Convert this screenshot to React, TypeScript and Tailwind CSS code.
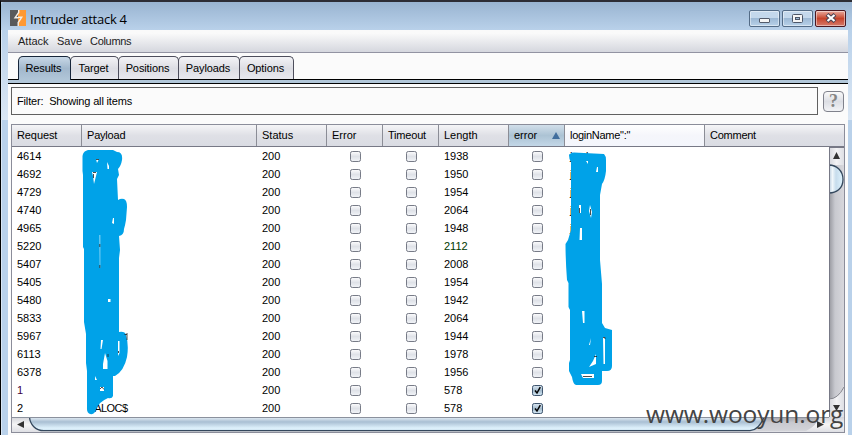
import React from "react";

type Row = { id: string; length: string; payload?: string; login?: string; checked?: boolean };

const rows: Row[] = [
  { id: "4614", length: "1938", login: "jordan" },
  { id: "4692", length: "1950", login: "j" },
  { id: "4729", length: "1954", login: "j" },
  { id: "4740", length: "2064", login: "j" },
  { id: "4965", length: "1948", login: "jenny" },
  { id: "5220", length: "2112" },
  { id: "5407", length: "2008" },
  { id: "5405", length: "1954" },
  { id: "5480", length: "1942" },
  { id: "5833", length: "2064", login: "l" },
  { id: "5967", length: "1944", payload: "jackson" },
  { id: "6113", length: "1978" },
  { id: "6378", length: "1956" },
  { id: "1", length: "578", checked: true },
  { id: "2", length: "578", payload: "CALOC$", checked: true },
];

const cols = "grid grid-cols-[70px_175px_70px_56px_56px_70px_56px_140px_1fr]";

function Check({ on }: { on?: boolean }) {
  return (
    <svg width="12" height="12" viewBox="0 0 12 12" className="ml-[2px] mt-px">
      <defs>
        <linearGradient id="cbOff" x1="0" y1="0" x2="0" y2="1">
          <stop offset="0" stopColor="#fdfdfe" />
          <stop offset=".5" stopColor="#dfe2e8" />
          <stop offset="1" stopColor="#f2f4f8" />
        </linearGradient>
        <linearGradient id="cbOn" x1="0" y1="0" x2="0" y2="1">
          <stop offset="0" stopColor="#dce8f3" />
          <stop offset=".5" stopColor="#a5bccd" />
          <stop offset="1" stopColor="#d3e7f5" />
        </linearGradient>
      </defs>
      <rect x=".5" y=".5" width="10" height="10" rx="1.8" fill={on ? "url(#cbOn)" : "url(#cbOff)"} stroke={on ? "#40566f" : "#777b87"} />
      {on && <path d="M3 5.5 5 8 8.3 2.2" fill="none" stroke="#000" strokeWidth="1.5" />}
    </svg>
  );
}

function Tab({ label, active, width }: { label: string; active?: boolean; width: string }) {
  return (
    <div
      className={`${width} h-[24px] rounded-t-[5px] border border-b-0 flex items-center justify-center pr-[2px] tracking-[-0.1px] ${
        active
          ? "relative z-10 border-[#17263a] bg-linear-to-b from-[#c8d8e7] via-[#a2b8cd] to-[#b1c6d8]"
          : "-ml-px h-[23px] border-[#4d4e5c] bg-linear-to-b from-[#f3f3f6] via-[#dcdde3] to-[#e9eaef]"
      }`}
    >
      {label}
    </div>
  );
}

function WinButton({ close, children }: { close?: boolean; children: React.ReactNode }) {
  return (
    <div
      className={`w-[31px] h-[17px] rounded-[2px] border flex items-center justify-center shadow-[inset_0_0_0_1px_rgba(255,255,255,0.45)] ${
        close
          ? "border-[#4b1720] bg-linear-to-b from-[#e8aa9e] from-0% via-[#c6432b] via-50% to-[#d5796a]"
          : "border-[#536b86] bg-linear-to-b from-[#c4d8ec] from-45% via-[#9db9d5] via-50% to-[#b8d1e9]"
      }`}
    >
      {children}
    </div>
  );
}

function Head({ children, className = "" }: { children?: React.ReactNode; className?: string }) {
  return <div className={`flex items-center border-r border-[#8b8d96] pl-[5px] ${className}`}>{children}</div>;
}

function Scribbles() {
  return (
    <svg className="absolute left-0 top-0 pointer-events-none" width="852" height="444" viewBox="0 0 852 444">
      <g fill="#00a2e8">
        <path d="M83 154Q84 151 88 150H113L117 152Q123 152 122 160Q121 166 118 169L119 175L117 179L118 200Q121 198 124 199Q127 200 127 207L126 220Q125 226 124 229Q124 235 119 236L120 250L119 258V332Q125 331 126 335Q129 345 127 357Q124 371 115 376H113V396Q112 399 108 398Q99 402 96 409Q95 415 90 414Q87 413 87 409V371L86 363V334L84 322V249L83 247V175L82.5 171V156Z" />
        <path d="M569 155Q570 153 574 152.5L604 154Q606 156 606 160V171Q605 180 602 184L600 195V260L602 284V323L605 328L612 330V366Q612 371 607 371H602V381Q602 385 598 385H576Q573 384 572 377L569 371V363L570 360V310L568.5 307V283L567 280Q565.5 260 565.5 244L568 240L571 230V162L569.5 159Z" />
      </g>
      <g fill="#fff">
        <path d="M96 159H99L97 163ZM107 162L109 166V169L107.5 169ZM92 172H97L94 184L93 176ZM113 218H114V224L112 223ZM99.6 235H100.2V268H99.8ZM108 299H110.5V302H108ZM101 340H103L101.5 349H100.5ZM105 353L107.5 361V369H103V364ZM118 341H119.5V353L118 356ZM95 376L97 380H95ZM100 387H104V391H100Z" />
        <path d="M586 161H588V164ZM597 167H598V172H596ZM579 205H581V213H579ZM590 205L592 212L591 218L589 211ZM580 228H582V240H579.5ZM582 311H584.5V323H583ZM591 338 589 345H590ZM596 354V364L589 367 593 361ZM603 337H605V364H603.5ZM581 374H594V378H583Z" />
      </g>
      <g fill="none" stroke="#222" strokeWidth=".8">
        <path d="M96 159.5H99M93 172.5H96M93.5 174V178M99.8 244V247M99.8 265V268M108 354V357M100 389L102 387 104 389.5M118.5 351V353M579.5 208V213M590.5 209V215M603 337.5H605V339M594 356.5H597M583 376.5H592M127 333V340M124.5 334.5H127" />
      </g>
    </svg>
  );
}

export default function App() {
  return (
    <div className="relative w-[852px] h-[444px] overflow-hidden bg-white text-[11px] leading-[13px] text-black font-['Liberation_Sans',Arial,sans-serif]">
      <div className="h-[435px] flex flex-col border-l border-[#000] border-t-2 border-t-[#2d2d35] bg-[#b9d1ea]">
        <header className="h-[28px] shrink-0 flex items-center pl-[9px] pr-[6px] rounded-tl-[4px] bg-linear-to-b from-[#99b4d1] to-[#b9d1ea]">
          <svg width="16" height="16" viewBox="0 0 16 16" className="mt-[4px]">
            <path fill="#58595b" d="M0 0H8V16H0Z" />
            <path fill="#ff9933" d="M8 0H16V16H8Z" />
            <path fill="none" stroke="#f4efe8" strokeWidth="1.4" d="M8.7 0V2.5L5 7.8H8.5V8M8 7.3H11.7L8.2 12.5V16" />
          </svg>
          <h1 className="ml-[4px] mt-[5px] text-[13px] leading-[16px] font-['Open_Sans',sans-serif] whitespace-nowrap tracking-[-0.25px]">Intruder attack 4</h1>
          <div className="ml-auto mt-[4px] flex gap-[2px]">
            <WinButton>
              <span className="mt-[4px] w-[11px] h-[5px] rounded-[1px] border border-[#535b6b] bg-[#f5f5f5]" />
            </WinButton>
            <WinButton>
              <svg width="11" height="9" viewBox="0 0 11 9"><rect x=".5" y=".5" width="10" height="8" rx="1" fill="#f5f5f5" stroke="#4d5668" /><rect x="3.5" y="3.5" width="4" height="2" fill="#9db9d5" stroke="#4d5668" /></svg>
            </WinButton>
            <WinButton close>
              <svg width="12" height="10" viewBox="0 0 12 10"><path d="M2 1.5 10 8.5M10 1.5 2 8.5" stroke="#4b4353" strokeWidth="4.2" /><path d="M2.5 2 9.5 8M9.5 2 2.5 8" stroke="#fff" strokeWidth="2.2" /></svg>
            </WinButton>
          </div>
        </header>

        <div className="flex-1 min-h-0 flex">
          <div className="w-[7px] flex flex-col border-l border-[#d9e6f3]">
            <div className="h-[90px] bg-linear-to-b from-[#b9d1ea] to-[#dbe7f4]" />
          </div>
          <main className="w-[840px] flex flex-col bg-[#fbfbfb]">
            <nav className="h-[23px] shrink-0 flex items-center gap-[8px] pl-[10px] border-b border-[#9293a2] bg-linear-to-b from-[#fafafa] from-15% to-[#d5d7de] text-[#222]">
              <span className="w-[31px]">Attack</span>
              <span className="w-[25px]">Save</span>
              <span className="tracking-[-0.3px]">Columns</span>
            </nav>
            <div className="h-[26px] shrink-0 flex items-start pt-[3px] pl-[10px]">
              <Tab label="Results" active width="w-[53px]" />
              <Tab label="Target" width="w-[49px]" />
              <Tab label="Positions" width="w-[61px]" />
              <Tab label="Payloads" width="w-[62px]" />
              <Tab label="Options" width="w-[55px]" />
            </div>
            <div className="h-[5px] shrink-0 flex flex-col border-b border-black bg-[#b1c6d8]">
              <div className="flex h-px"><i className="w-[10px] bg-black" /><i className="w-[53px]" /><i className="flex-1 bg-black" /></div>
            </div>
            <div className="mt-[3px] ml-[3px] flex items-center">
              <div className="w-[807px] h-[28px] border border-[#606060] flex items-center pl-[5px] whitespace-pre tracking-[-0.16px]">Filter:  Showing all items</div>
              <div className="ml-[5px] w-[21px] h-[21px] rounded-[4px] border border-[#80828c] bg-linear-to-b from-[#fafafa] via-[#dcdee4] to-[#f2f3f6] flex items-center justify-center text-[18px] leading-[18px] font-bold text-[#858585] font-['Liberation_Serif',serif]">?</div>
            </div>

            <section className="mt-[9px] ml-[3px] w-[834px] h-[309px] shrink-0 border border-[#8b8d9a] bg-white flex flex-col">
              <div className={`${cols} h-[22px] shrink-0 border-b border-[#777986] bg-linear-to-b from-[#f5f5f7] via-[#dfe0e6] to-[#dadce3]`}>
                <Head className="tracking-[-0.1px]">Request</Head>
                <Head className="tracking-[-0.2px]">Payload</Head>
                <Head>Status</Head>
                <Head>Error</Head>
                <Head className="tracking-[-0.2px]">Timeout</Head>
                <Head>Length</Head>
                <Head className="bg-linear-to-b from-[#d2dfea] via-[#acc3d4] to-[#c3d7e7]">
                  error
                  <svg className="ml-auto mr-[4px]" width="8" height="7" viewBox="0 0 8 7"><path d="M4 0 8 7H0Z" fill="#416e9d" /></svg>
                </Head>
                <Head className="bg-linear-to-b from-white via-[#f5f6fb] to-[#f4f6fc] tracking-[-0.28px]">loginName":"</Head>
                <div className="flex items-center pl-[5px] tracking-[-0.25px]">Comment</div>
              </div>
              <div className="flex h-[270px] shrink-0">
                <div className="w-[817px]">
                  {rows.map((r) => (
                    <div key={r.id} className={`${cols} h-[18px] items-center`}>
                      <span className={`pl-[5px] ${r.id === "1" ? "text-[#400040]" : ""}`}>{r.id}</span>
                      <span className="pl-[5px] tracking-[-0.6px]">{r.payload}</span>
                      <span className="pl-[5px]">200</span>
                      <span className="flex justify-center"><Check /></span>
                      <span className="flex justify-center"><Check /></span>
                      <span className={`pl-[5px] ${r.id === "5220" ? "text-[#003800]" : ""}`}>{r.length}</span>
                      <span className="flex justify-center"><Check on={r.checked} /></span>
                      <span className="pl-[5px]">{r.login}</span>
                    </div>
                  ))}
                </div>
                <svg width="15" height="270" viewBox="0 0 15 270">
                  <defs>
                    <linearGradient id="vt"><stop stopColor="#96979e" /><stop offset=".4" stopColor="#c8c9cf" /><stop offset="1" stopColor="#d7d7dc" /></linearGradient>
                    <linearGradient id="vb"><stop stopColor="#b8cadb" /><stop offset=".25" stopColor="#f0f7fb" /><stop offset=".5" stopColor="#c6dcec" /><stop offset="1" stopColor="#e0f4ff" /></linearGradient>
                    <linearGradient id="ve"><stop stopColor="#d5d6dc" /><stop offset=".5" stopColor="#f3f3f5" /><stop offset="1" stopColor="#dedfe4" /></linearGradient>
                  </defs>
                  <rect width="15" height="270" fill="url(#ve)" />
                  <path d="M0 18H15V238Q10 252 0 252Z" fill="url(#vt)" />
                  <path d="M0 252Q9 252 15 240" fill="none" stroke="#85868d" />
                  <path d="M0 18C7 18 14 23 14 32.5S7 46 0 46Z" fill="url(#vb)" stroke="#34485d" strokeWidth="1.3" />
                  <path d="M.5 0V270M0 .5H15" stroke="#777986" />
                  <path d="M7.5 5 11 12H4ZM4 258H11L7.5 264Z" fill="#333" />
                </svg>
              </div>
              <svg width="832" height="15" viewBox="0 0 832 15">
                <defs>
                  <linearGradient id="hb" x1="0" y1="0" x2="0" y2="1"><stop stopColor="#e8f0f7" /><stop offset=".35" stopColor="#a9bfd3" /><stop offset=".8" stopColor="#dff2fd" /><stop offset="1" stopColor="#c7dce9" /></linearGradient>
                  <linearGradient id="he" x1="0" y1="0" x2="0" y2="1"><stop stopColor="#d3d4da" /><stop offset=".5" stopColor="#f5f5f6" /><stop offset="1" stopColor="#dedfe4" /></linearGradient>
                  <linearGradient id="ht" x1="0" y1="0" x2="0" y2="1"><stop stopColor="#a4a5ac" /><stop offset=".4" stopColor="#c8c9cf" /><stop offset="1" stopColor="#d3d4d9" /></linearGradient>
                </defs>
                <rect width="832" height="15" fill="url(#he)" />
                <path d="M700 0H806Q806 8 794 14H700Z" fill="url(#ht)" />
                <path d="M17 0C18 7 23 14 32 14H738Q747 14 752 0Z" fill="url(#hb)" />
                <path d="M17.5 0C18 7 23 13.7 32 13.7H738Q747 13 752 0" fill="none" stroke="#34485d" strokeWidth="1.3" />
                <path d="M0 .5H817" stroke="#8b919d" />
                <path d="M5 7.5 12 4V11ZM812 7.5 805 4V11Z" fill="#333" />
              </svg>
            </section>
          </main>
          <div className="w-[4px]"><div className="h-[90px] bg-linear-to-b from-[#b9d1ea] to-[#dbe7f4]" /></div>
        </div>
      </div>
      <Scribbles />
      <div className="absolute left-[646px] top-[398px] text-[24.5px] leading-[32px] tracking-[-0.1px] text-[#444] whitespace-nowrap font-['Open_Sans',sans-serif]">www.wooyun.org</div>
    </div>
  );
}
